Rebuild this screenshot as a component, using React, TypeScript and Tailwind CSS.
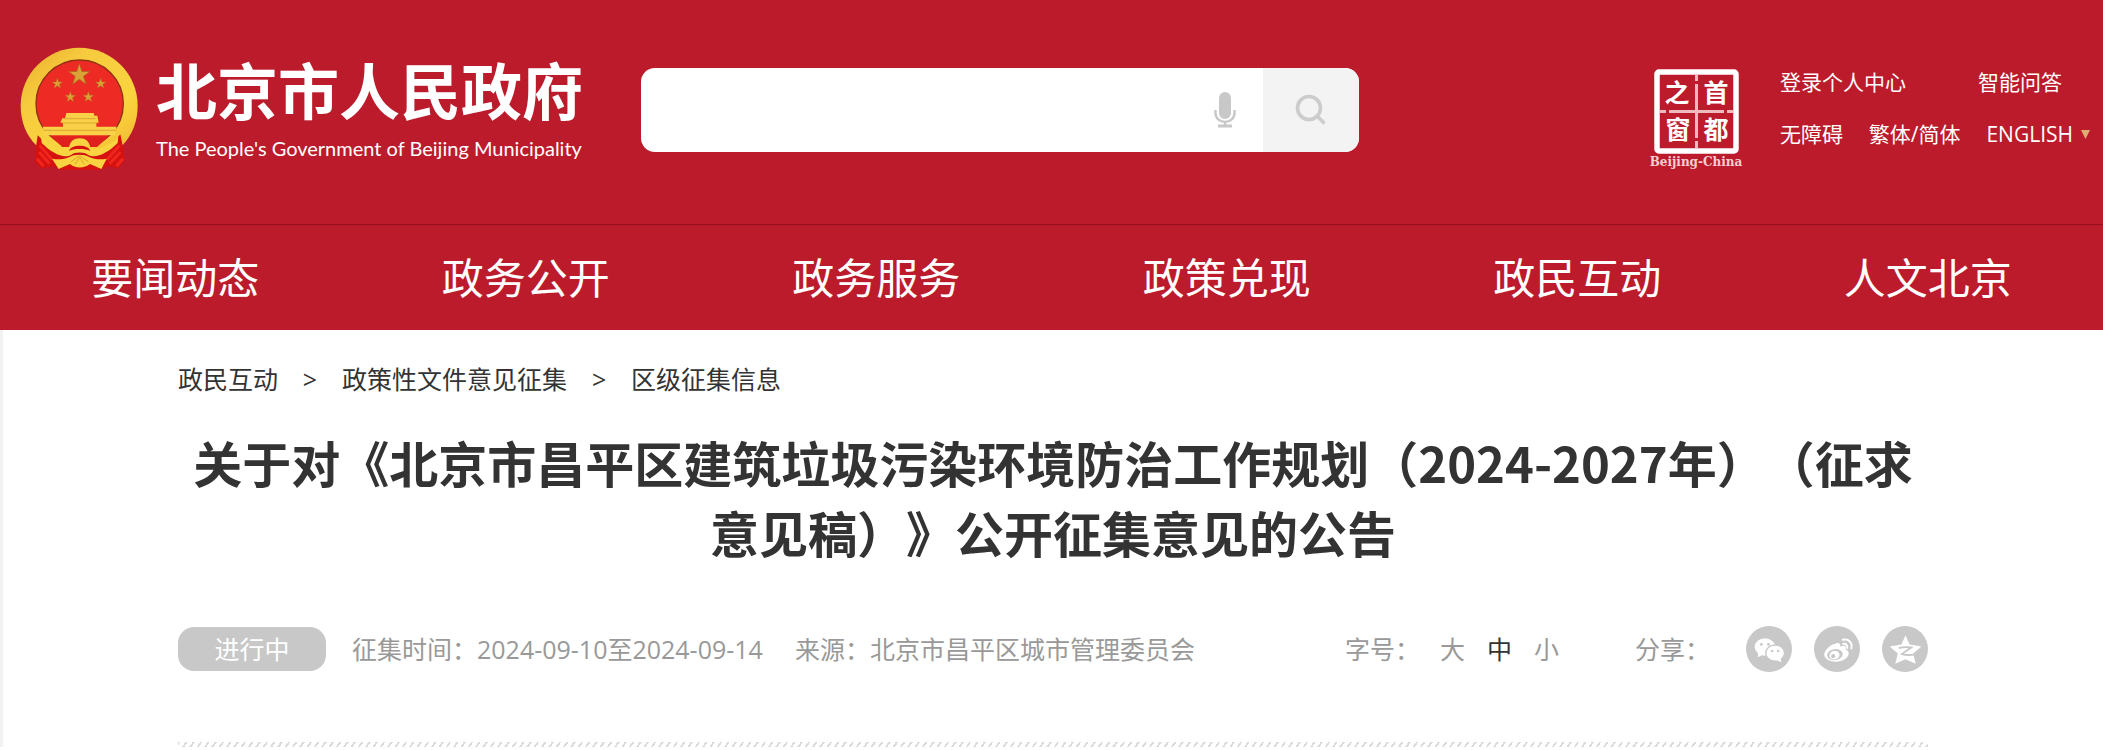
const navItems = ['要闻动态', '政务公开', '政务服务', '政策兑现', '政民互动', '人文北京'];

const crumbs = ['政民互动', '政策性文件意见征集', '区级征集信息'];

const fontSizes = [
  { label: '大', active: false },
  { label: '中', active: true },
  { label: '小', active: false },
];

const STAR = 'M0-10 2.3-3.1 9.5-3.1 3.7 1.2 5.9 8.1 0 3.8-5.9 8.1-3.7 1.2-9.5-3.1-2.3-3.1Z';

function Emblem() {
  return (
    <svg className="h-[124px] w-[118px] shrink-0" viewBox="59 50 354 372" aria-hidden="true">
      <defs>
        <linearGradient id="gold" x1="0" y1="0" x2="1" y2="1">
          <stop offset="0" stopColor="#e9ac2c" />
          <stop offset="0.3" stopColor="#f6cb3e" />
          <stop offset="0.7" stopColor="#fad43f" />
          <stop offset="1" stopColor="#f0b62f" />
        </linearGradient>
      </defs>
      <path d="M237 52C140 52 61 130 61 226c0 50 18 90 46 118l30 20h200l30-20c28-30 45-70 45-118C412 130 334 52 237 52Z" fill="url(#gold)" />
      <circle cx="238" cy="220" r="131" fill="#ee2a24" stroke="#8f3214" strokeWidth="4" />
      <g fill="#d9a136" stroke="#a8641b" strokeWidth="0.6">
        <path d={STAR} transform="translate(237 134) scale(3.4)" />
        <path d={STAR} transform="translate(171 160) scale(1.7)" />
        <path d={STAR} transform="translate(301 160) scale(1.7)" />
        <path d={STAR} transform="translate(210 200) scale(1.7)" />
        <path d={STAR} transform="translate(264 200) scale(1.7)" />
      </g>
      <path d="M198 248H280L282 256H291L295 277H288V289H349L343 315H133L127 289H188V277H180L186 264H194Z" fill="#f8d148" />
      <path d="M190 265H286M186 278H290M130 300H348" stroke="#dda52d" strokeWidth="3" />
      <path d="M112 315 107 350 104 395 124 414 160 408 180 418H300L322 408 354 414 372 392 368 350 360 312C330 350 290 370 238 370S146 350 112 315Z" fill="#d5120f" />
      <path d="M118 345 155 388M116 365 148 400M358 345 320 388M360 365 328 400M130 408 110 385M348 408 368 385" stroke="#f0261c" strokeWidth="9" fill="none" />
      <path d="M150 318H326L290 350H186Z" fill="#e0201c" />
      <path d="M122 318c30 32 62 44 84 34 4-20 14-28 32-28s28 8 32 28c22 10 54-2 84-34l-2 20c-30 30-66 48-88 36-10-10-42-10-52 0-22 12-58-6-88-36Z" fill="#f9d440" />
      <path d="M206 362c4-12 16-16 32-16s28 4 32 16c-16-8-48-8-64 0Z" fill="#d5120f" />
      <path d="M155 385c20 4 36 2 54-6 10-8 46-8 56 0 18 8 34 10 54 6l-16 31-34-15c-16 14-46 14-60 0l-34 15Z" fill="#f9d440" />
      <path d="M212 394 238 376 264 394M224 402 238 380 252 402" stroke="#dca629" strokeWidth="3" fill="none" />
    </svg>
  );
}

function CapitalWindow() {
  return (
    <a href="#" className="flex w-24 shrink-0 flex-col items-center text-white">
      <svg className="h-[85px] w-[85px]" viewBox="0 0 85 85" role="img" aria-label="首都之窗">
        <rect x="3" y="3" width="79" height="79" rx="2" fill="none" stroke="#fff" strokeWidth="5.500" />
        <path d="M42.500 6V12M42.500 15V69M42.500 72V79M6 42.500H12M15 42.500H70M73 42.500H79" stroke="#f0b9be" strokeWidth="3" />
        <g fill="#fff" fontSize="25" fontWeight="700" textAnchor="middle" fontFamily="'Noto Sans CJK SC', sans-serif">
          <text x="23" y="33">之</text>
          <text x="62" y="33">首</text>
          <text x="24" y="70">窗</text>
          <text x="62" y="70">都</text>
        </g>
      </svg>
      <span className="font-['DejaVu_Serif',serif] text-xs leading-4 font-bold text-[#f5cdd1]">Beijing-China</span>
    </a>
  );
}

function SearchBar() {
  return (
    <form className="flex h-[84px] w-[718px] overflow-hidden rounded-[14px] bg-white" onSubmit={e => e.preventDefault()}>
      <input type="text" aria-label="搜索" className="min-w-0 flex-1 bg-transparent px-6 text-2xl text-[#333] outline-none" />
      <button type="button" aria-label="语音输入" className="flex w-[76px] items-center justify-center">
        <svg className="h-9 w-[22px]" viewBox="0 0 22 36">
          <rect x="5" y="0" width="12" height="27" rx="6" fill="#c8c8c8" />
          <path d="M1.500 18V21A9.500 9 0 0 0 20.500 21V18M11 30V34" fill="none" stroke="#c8c8c8" strokeWidth="2.500" />
          <path d="M4 32.500H18V35.500H4Z" fill="#c8c8c8" />
        </svg>
      </button>
      <button type="submit" aria-label="搜索" className="flex w-24 items-center justify-center bg-[#f3f3f3]">
        <svg className="size-8" viewBox="0 0 32 32" fill="none" stroke="#ccc" strokeWidth="3.600">
          <circle cx="14" cy="14" r="11.500" />
          <path d="M22 22 29.500 29.500" />
        </svg>
      </button>
    </form>
  );
}

function ShareIcons() {
  return (
    <div className="flex gap-[22px]">
      <a href="#" aria-label="微信">
        <svg className="size-[46px]" viewBox="0 0 45 45">
          <circle cx="22.500" cy="22.500" r="22.500" fill="#c8c8c8" />
          <ellipse cx="18.500" cy="20.500" rx="10" ry="8.500" fill="#fff" />
          <path d="M12 26 11.500 30.500 17 28Z" fill="#fff" />
          <ellipse cx="28.500" cy="26.500" rx="9.200" ry="8" fill="#fff" stroke="#c8c8c8" strokeWidth="1.400" />
          <path d="M29 33 34.500 35.500 34 31Z" fill="#fff" />
          <g fill="#c8c8c8">
            <circle cx="15" cy="18" r="1.400" />
            <circle cx="22" cy="18" r="1.400" />
            <circle cx="25.500" cy="24.500" r="1.200" />
            <circle cx="31.500" cy="24.500" r="1.200" />
          </g>
        </svg>
      </a>
      <a href="#" aria-label="微博">
        <svg className="size-[46px]" viewBox="0 0 45 45">
          <circle cx="22.500" cy="22.500" r="22.500" fill="#c8c8c8" />
          <path d="M20 17.500C16 18 10 24 10 28c0 4 5 7 11 7 8 0 13-4.500 13-8 0-2.500-2-3.500-3-4 .500-2 .500-5-5.500-3 .500-3-1-4.500-5.500-2.500Z" fill="#fff" />
          <ellipse cx="20.500" cy="28" rx="7.600" ry="5.400" fill="#c8c8c8" transform="rotate(-8 20.500 28)" />
          <ellipse cx="20" cy="28.500" rx="5" ry="4.200" fill="#fff" transform="rotate(-15 20 28.500)" />
          <circle cx="18.800" cy="29.500" r="2" fill="#c8c8c8" />
          <path d="M28 13.500c6-1.500 10 3 8.500 8.500M28.500 17.500c3-.500 4.500 1.500 4 4" fill="none" stroke="#fff" strokeWidth="1.900" strokeLinecap="round" />
        </svg>
      </a>
      <a href="#" aria-label="QQ空间">
        <svg className="size-[46px]" viewBox="0 0 45 45">
          <circle cx="22.500" cy="22.500" r="22.500" fill="#c8c8c8" />
          <path d="M23 9 27 18 38.500 20 30.500 27 33 37 23 32.500 13 37 15.500 27 7.500 20 19 18Z" fill="#fff" />
          <path d="M16.500 21.500C21 20.500 25 20.500 28.500 21L19.500 27.500C23 28.500 28 28.500 31.500 28" fill="none" stroke="#c8c8c8" strokeWidth="1.800" />
        </svg>
      </a>
    </div>
  );
}

export default function App() {
  return (
    <div className="min-h-screen bg-white font-['Open_Sans','Noto_Sans_CJK_SC',sans-serif] text-[#333] [text-spacing-trim:space-all]">
      <header className="bg-[#bc1b2c] text-white">
        <div className="flex h-[224px] items-start pt-[47px] pr-[13px] pl-5">
          <a href="#" className="flex w-[621px] shrink-0 gap-[18px]">
            <Emblem />
            <div className="pt-2">
              <div className="text-[61px] leading-[74px] font-bold">北京市人民政府</div>
              <div className="font-[Lato,sans-serif] text-xl leading-[38px] whitespace-nowrap">
                The People's Government of Beijing Municipality
              </div>
            </div>
          </a>
          <div className="pt-[21px]">
            <SearchBar />
          </div>
          <div className="ml-auto flex gap-9 pt-[22px]">
            <CapitalWindow />
            <div className="flex w-[310px] flex-col gap-[26px] text-[21px] leading-[26px]">
              <div className="flex justify-between pr-7">
                <a href="#">登录个人中心</a>
                <a href="#">智能问答</a>
              </div>
              <div className="flex justify-between whitespace-nowrap">
                <a href="#">无障碍</a>
                <a href="#">繁体/简体</a>
                <a href="#" className="flex items-center gap-2">
                  ENGLISH
                  <svg className="h-[9px] w-[9px]" viewBox="0 0 9 9">
                    <path d="M0 0H9L4.500 9Z" fill="#dcae72" />
                  </svg>
                </a>
              </div>
            </div>
          </div>
        </div>
        <nav className="grid grid-cols-6 border-t border-[#960f1f]">
          {navItems.map(item => (
            <a key={item} href="#" className="py-6 text-center text-[42px] leading-[57px]">
              {item}
            </a>
          ))}
        </nav>
      </header>

      <main className="border-l-3 border-[#f2f2f2]">
        <div className="mx-auto max-w-[1750px] pt-[31px]">
          <div className="flex text-[25px] leading-9">
            {crumbs.map((crumb, i) => (
              <div key={crumb} className="flex">
                {i > 0 && <span className="w-16 text-center">&gt;</span>}
                <a href="#">{crumb}</a>
              </div>
            ))}
          </div>

          <h1 className="mt-[30px] text-center font-['Noto_Sans_CJK_SC',sans-serif] text-[49px] leading-[70px] font-bold">
            关于对《北京市昌平区建筑垃圾污染环境防治工作规划（2024-2027年）（征求意见稿）》公开征集意见的公告
          </h1>

          <div className="mt-[59px] flex items-center text-[25px] leading-9 text-[#999]">
            <span className="w-[148px] rounded-2xl bg-[#c8c8c8] py-1 text-center text-white">进行中</span>
            <span className="ml-[26px]">征集时间：2024-09-10至2024-09-14</span>
            <span className="ml-8">来源：北京市昌平区城市管理委员会</span>
            <div className="ml-auto flex items-center">
              <span>字号：</span>
              <div className="ml-5 flex gap-[22px]">
                {fontSizes.map(size => (
                  <button key={size.label} type="button" className={size.active ? 'text-[#333]' : ''}>
                    {size.label}
                  </button>
                ))}
              </div>
              <span className="mr-9 ml-[76px]">分享：</span>
              <ShareIcons />
            </div>
          </div>

          <div className="mt-[70px] h-[5px] bg-[repeating-linear-gradient(125deg,#dcdcdc_0_2px,#fff_2px_6px)]" />
        </div>
      </main>
    </div>
  );
}
